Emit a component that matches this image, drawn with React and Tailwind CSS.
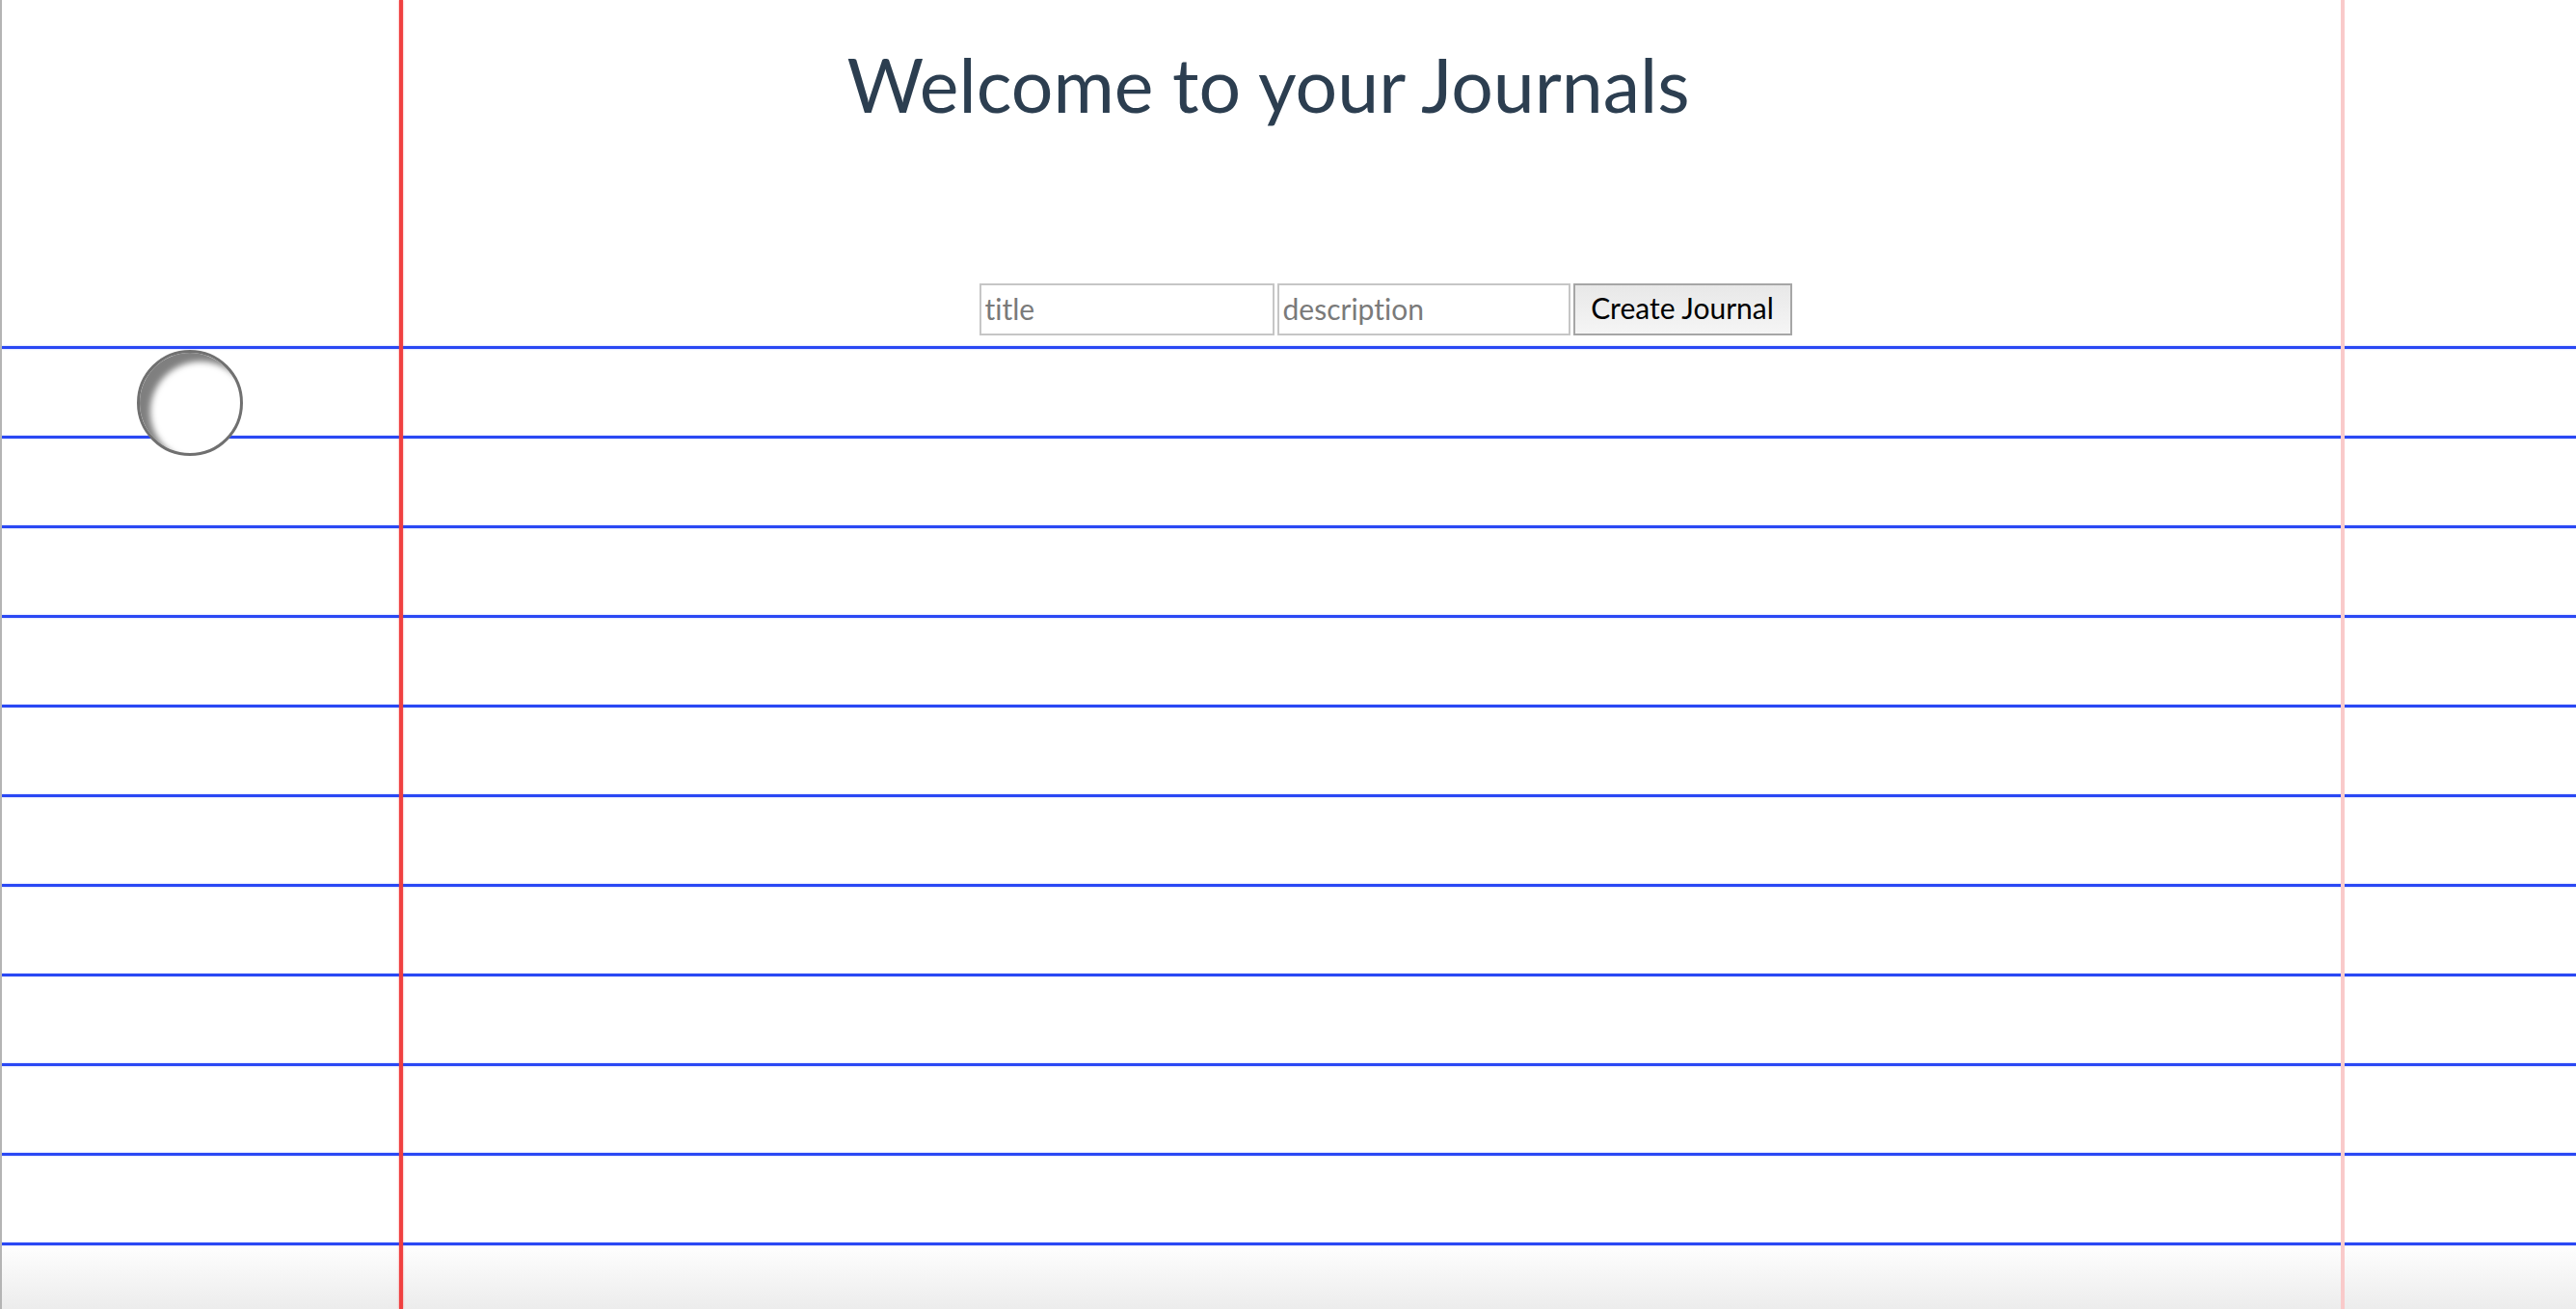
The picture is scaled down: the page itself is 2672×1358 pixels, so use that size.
import React from "react";

function Line() {
  return <div className="h-[3px] w-full bg-[#2a48f4] shadow-[0_0_1.5px_rgba(60,90,255,0.6)]" />;
}

const FONT = { fontFamily: "Lato, 'Noto Sans', Arial, sans-serif" };

export default function App() {
  const rows = Array.from({ length: 10 });
  return (
    <div
      className="relative w-[2672px] h-[1358px] overflow-hidden bg-white border-l-2 border-[#b4b4b4] flex flex-col [font-variant-ligatures:none]"
      style={FONT}
    >
      {/* header */}
      <div className="h-[359px] shrink-0 flex flex-col">
        <div className="flex justify-center pr-[43px] pt-[49px]">
          <h1 className="text-[77px] leading-none font-normal text-[#2c3e50]">
            Welcome to your Journals
          </h1>
        </div>
        <div className="flex justify-center pl-[200px] mt-[168px] gap-[3px]">
          <input
            placeholder="title"
            className="w-[306px] h-[54px] border-2 border-[#c6c6c6] bg-white px-[4px] pb-[3px] text-[30px] text-black placeholder:text-[#7a7a7a] outline-none [font-variant-ligatures:none]"
            style={FONT}
          />
          <input
            placeholder="description"
            className="w-[304px] h-[54px] border-2 border-[#c6c6c6] bg-white px-[4px] pb-[3px] text-[30px] text-black placeholder:text-[#7a7a7a] outline-none [font-variant-ligatures:none]"
            style={FONT}
          />
          <button
            className="w-[227px] h-[54px] border-2 border-[#a6a6a6] bg-gradient-to-b from-[#e8e8e8] to-[#f5f5f5] pb-[4px] text-[30px] text-black flex items-center justify-center"
            style={FONT}
          >
            Create Journal
          </button>
        </div>
      </div>

      {/* ruled lines */}
      {rows.map((_, i) => (
        <div key={i} className="h-[93px] shrink-0 flex flex-col">
          <Line />
        </div>
      ))}
      <div className="flex-1 flex flex-col bg-gradient-to-b from-white to-[#ececec]">
        <Line />
      </div>

      {/* margin lines */}
      <div className="absolute top-0 bottom-0 left-[412px] w-[4px] bg-[#f04040] shadow-[0_0_2px_rgba(240,60,60,0.7)]" />
      <div className="absolute top-0 bottom-0 left-[2426px] w-[4px] bg-[#f9caca]" />

      {/* binder hole */}
      <div className="absolute left-[140px] top-[363px] w-[110px] h-[110px] rounded-full bg-white border-[3px] border-[#707070] shadow-[inset_11px_9px_6px_rgba(0,0,0,0.5)]" />
    </div>
  );
}
